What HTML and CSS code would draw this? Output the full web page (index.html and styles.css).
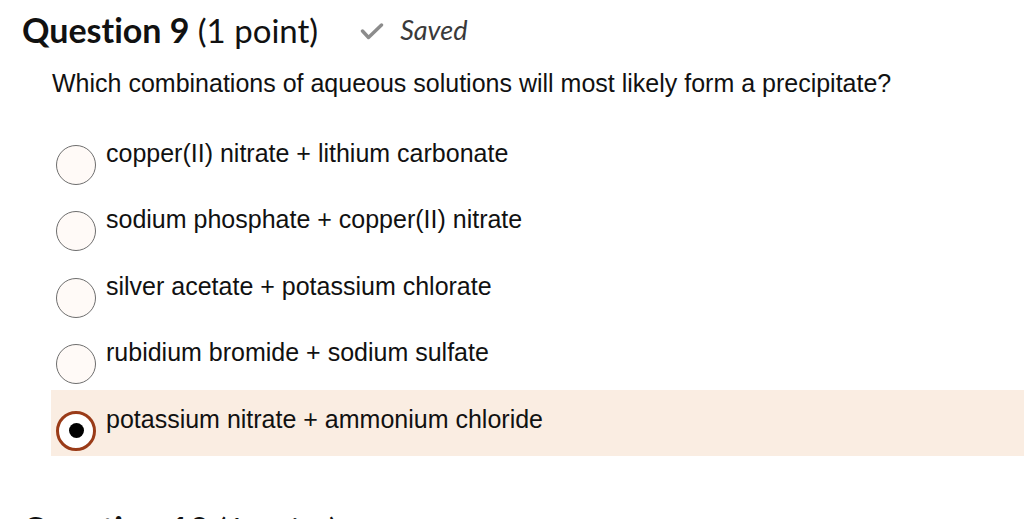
FILE: index.html
```html
<!DOCTYPE html>
<html>
<head>
<meta charset="utf-8">
<link rel="stylesheet" href="styles.css">
</head>
<body>
<div class="qhead">
  <h2 class="qtitle"><span class="qnum">Question 9</span> <span class="qpts">(1 point)</span></h2>
  <div class="saved">
    <svg class="check" width="24" height="18" viewBox="0 0 24 18"><polyline points="2.5,8 8.5,14.5 21.5,2" fill="none" stroke="#8c8c8c" stroke-width="3.4" stroke-linecap="round" stroke-linejoin="round"/></svg>
    <span class="saved-text">Saved</span>
  </div>
</div>
<p class="prompt">Which combinations of aqueous solutions will most likely form a precipitate?</p>
<div class="options">
  <div class="option"><span class="radio"></span><span class="label">copper(II) nitrate + lithium carbonate</span></div>
  <div class="option"><span class="radio"></span><span class="label">sodium phosphate + copper(II) nitrate</span></div>
  <div class="option"><span class="radio"></span><span class="label">silver acetate + potassium chlorate</span></div>
  <div class="option"><span class="radio"></span><span class="label">rubidium bromide + sodium sulfate</span></div>
  <div class="option selected"><span class="radio"><span class="dot"></span></span><span class="label">potassium nitrate + ammonium chloride</span></div>
</div>
<div class="qhead next">
  <h2 class="qtitle"><span class="qnum">Question 10</span> <span class="qpts">(1 point)</span></h2>
</div>
</body>
</html>
```

FILE: styles.css
```css
html, body {
  margin: 0;
  padding: 0;
  background: #ffffff;
  overflow: hidden;
}
body {
  width: 1024px;
  height: 519px;
  color: #111111;
}
.qhead {
  display: flex;
  align-items: flex-start;
  padding: 10px 0 0 22px;
  height: 40px;
}
.qtitle {
  margin: 0;
  font-family: Lato, "Open Sans", sans-serif;
  font-size: 34px;
  line-height: 40px;
  color: #111111;
  white-space: nowrap;
  font-variant-ligatures: none;
}
.qnum { font-weight: 700; }
.qpts { font-weight: 400; font-size: 33px; }
.saved {
  display: flex;
  align-items: flex-start;
  margin-left: 42px;
}
.check {
  margin-top: 13px;
  margin-right: 16px;
}
.saved-text {
  font-family: Lato, "Open Sans", sans-serif;
  font-style: italic;
  font-size: 27px;
  line-height: 40px;
  color: #3a3a3a;
}
.prompt {
  margin: 18px 0 0 52px;
  font-family: "Liberation Sans", Arial, sans-serif;
  font-size: 25px;
  line-height: 30px;
  color: #111111;
}
.options {
  margin: 26px 0 0 51px;
}
.option {
  display: flex;
  align-items: flex-start;
  height: 66.4px;
  box-sizing: border-box;
  padding-top: 14px;
}
.option.selected {
  background: #faede2;
}
.radio {
  box-sizing: border-box;
  width: 40px;
  height: 40px;
  margin: 7px 10px 0 5px;
  border-radius: 50%;
  border: 1.5px solid #6e6e6e;
  background: #fffaf7;
  display: flex;
  align-items: center;
  justify-content: center;
  flex: none;
}
.selected .radio {
  border: 3px solid #9a3b18;
  background: #ffffff;
}
.dot {
  width: 15px;
  height: 15px;
  border-radius: 50%;
  background: #000000;
}
.label {
  font-family: "Liberation Sans", Arial, sans-serif;
  font-size: 25px;
  line-height: 30px;
  color: #111111;
}
.next {
  margin-top: 53px;
  padding-top: 0;
}
```
